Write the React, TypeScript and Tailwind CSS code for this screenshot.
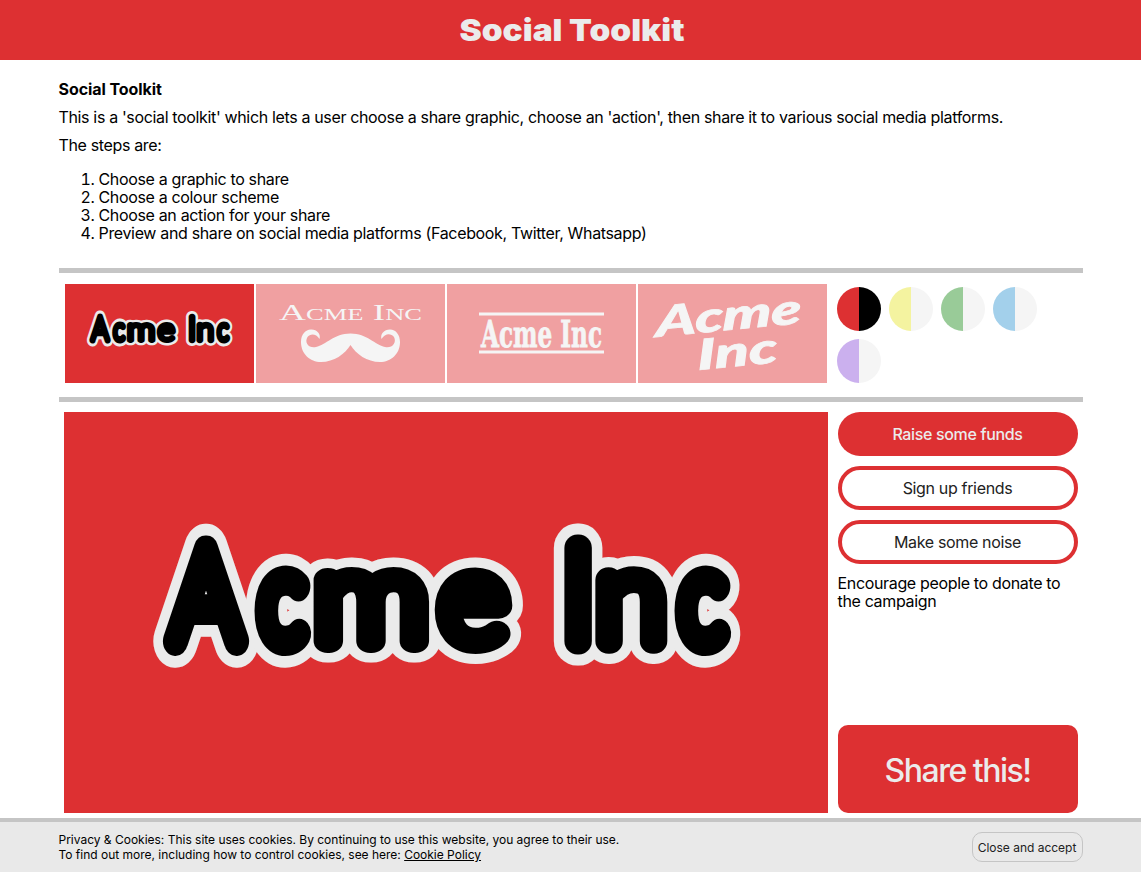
const bubbleGlyphs = [
  { char: 'A', x: 142, scaleX: 0.835, scaleY: 1.03 },
  { char: 'c', x: 218, scaleX: 0.75, scaleY: 0.97 },
  { char: 'm', x: 307, scaleX: 1.14, scaleY: 0.98 },
  { char: 'e', x: 409, scaleX: 1.02, scaleY: 0.97 },
  { char: 'I', x: 514, scaleX: 1, scaleY: 1.045 },
  { char: 'n', x: 567, scaleX: 1, scaleY: 0.98 },
  { char: 'c', x: 638, scaleX: 0.75, scaleY: 0.97 },
]

function BubbleLayer({ color, weight }: { color: string; weight: number }) {
  return (
    <g fill={color} stroke={color} strokeLinejoin="round" strokeLinecap="round" textAnchor="middle" fontFamily="Lato, sans-serif" fontWeight="100" fontSize="126">
      {bubbleGlyphs.map(({ char, x, scaleX, scaleY }) => (
        <text key={x} transform={`translate(${x} 228.5) scale(${scaleX} ${scaleY})`} strokeWidth={weight / Math.sqrt(scaleX)}>{char}</text>
      ))}
    </g>
  )
}

function BubbleLogo() {
  return (
    <svg viewBox="0 0 764 401" preserveAspectRatio="none" className="block h-full w-full" role="img" aria-label="Acme Inc">
      <BubbleLayer color="#ebebeb" weight={47} />
      <BubbleLayer color="#000" weight={26} />
    </svg>
  )
}

function MoustacheLogo() {
  return (
    <svg viewBox="0 0 189 99" className="block h-full w-full" fill="#f5f5f5">
      <text x="23" y="36" fontFamily="'Liberation Serif', serif" fontSize="22.500" textLength="143" lengthAdjust="spacingAndGlyphs" style={{ fontVariant: 'small-caps' }}>Acme Inc</text>
      <path d="M94.500 61C89 70 78 78 65 78C54 78 45 70 45 58C45 50 50 45 55.500 45.500C61 45.500 65 50 63.500 55C60 49 54 49.500 51.500 53C48 59 53 64.500 60 63C70 61 78 49.500 94.500 49.500C111 49.500 119 61 129 63C136 64.500 141 59 138 53C135 49 129 49 125.500 55C124 50 128 45.500 134 45.500C140 45.500 144 51 144 58C144 70 135 78 124 78C111 78 100 70 94.500 61Z" />
    </svg>
  )
}

function SlabLogo() {
  return (
    <svg viewBox="0 0 189 99" className="block h-full w-full" fill="#f5f5f5">
      <rect x="32" y="28.500" width="125" height="3" />
      <text transform="translate(94.500 63) scale(.625 1)" textAnchor="middle" fontFamily="'DejaVu Serif', serif" fontWeight="700" fontSize="37" stroke="#f5f5f5" strokeWidth=".8">Acme Inc</text>
      <rect x="32" y="66.500" width="125" height="3" />
    </svg>
  )
}

function ItalicLogo() {
  return (
    <svg viewBox="0 0 189 99" className="block h-full w-full" fill="#f5f5f5" stroke="#f5f5f5" strokeWidth=".8" fontFamily="Lato, sans-serif" fontWeight="900" fontStyle="italic" fontSize="42">
      <text transform="translate(18 53) rotate(-5.500) skewX(-6)" textLength="146" lengthAdjust="spacingAndGlyphs">Acme</text>
      <text transform="translate(60 86) rotate(-5.500) skewX(-3)" textLength="80" lengthAdjust="spacingAndGlyphs">Inc</text>
    </svg>
  )
}

const schemes = [
  ['#dd3032', '#000000'],
  ['#f4f3a0', '#f5f5f5'],
  ['#99cb98', '#f5f5f5'],
  ['#a3d0eb', '#f5f5f5'],
  ['#cbb0ee', '#f5f5f5'],
]

export default function App() {
  return (
    <div className="flex h-[872px] flex-col overflow-hidden bg-white font-[Inter,sans-serif] text-base leading-[18px] text-black">
      <header className="flex h-[60px] shrink-0 justify-center bg-[#dd3032]">
        <svg className="h-[60px] w-[240px]" viewBox="0 0 240 60">
          <text x="8.500" y="41" fill="#ebebeb" fontFamily="Inter, sans-serif" fontWeight="900" fontSize="30" textLength="225" lengthAdjust="spacingAndGlyphs">Social Toolkit</text>
        </svg>
      </header>

      <main className="mx-auto flex w-[1024px] grow flex-col">
        <section className="h-[208px] pt-5">
          <h1 className="mb-2.5 font-bold tracking-[-0.08px]">Social Toolkit</h1>
          <p className="mb-2.5 tracking-[-0.35px]">This is a 'social toolkit' which lets a user choose a share graphic, choose an 'action', then share it to various social media platforms.</p>
          <p className="mb-4 tracking-[-0.35px]">The steps are:</p>
          <ol className="list-decimal pl-10 tracking-[-0.34px]">
            <li>Choose a graphic to share</li>
            <li>Choose a colour scheme</li>
            <li>Choose an action for your share</li>
            <li>Preview and share on social media platforms (Facebook, Twitter, Whatsapp)</li>
          </ol>
        </section>

        <section className="flex h-[134px] gap-2.5 border-y-[5px] border-[#c5c5c5] pl-1.5 pt-[11px]">
          <div className="flex h-[99px] gap-0.5">
            <button className="h-[99px] w-[189px] bg-[#dd3032]"><BubbleLogo /></button>
            <button className="h-[99px] w-[189px] bg-[#f0a0a1]"><MoustacheLogo /></button>
            <button className="h-[99px] w-[189px] bg-[#f0a0a1]"><SlabLogo /></button>
            <button className="h-[99px] w-[189px] bg-[#f0a0a1]"><ItalicLogo /></button>
          </div>
          <div className="flex w-[236px] flex-wrap content-start gap-2 pt-[3px]">
            {schemes.map(([left, right]) => (
              <button key={left} className="flex size-11 overflow-hidden rounded-full" aria-label="Colour scheme">
                <span className="h-full w-1/2" style={{ background: left }} />
                <span className="h-full w-1/2" style={{ background: right }} />
              </button>
            ))}
          </div>
        </section>

        <section className="flex gap-2.5 pl-[5px] pt-2.5">
          <div className="h-[401px] w-[764px] bg-[#dd3032]"><BubbleLogo /></div>
          <div className="flex h-[401px] w-[240px] flex-col tracking-[-0.34px]">
            <div className="flex flex-col gap-2.5">
              <button className="h-11 rounded-full bg-[#dd3032] font-[450] text-[#ebebeb]">Raise some funds</button>
              <button className="h-11 rounded-full border-4 border-[#dd3032] text-[#222]">Sign up friends</button>
              <button className="h-11 rounded-full border-4 border-[#dd3032] text-[#222]">Make some noise</button>
            </div>
            <p className="mt-2.5">Encourage people to donate to the campaign</p>
            <button className="mt-auto h-[88px] rounded-[10px] bg-[#dd3032] pt-[3px] text-[32px] font-[450] tracking-[-1.5px] text-[#ebebeb]">Share this!</button>
          </div>
        </section>
      </main>

      <footer className="shrink-0 border-t-4 border-[#c5c5c5] bg-[#e9e9e9]">
        <div className="mx-auto flex h-[50px] w-[1024px] justify-between pt-2.5 text-xs leading-[15px] tracking-[-0.01px]">
          <p>
            Privacy &amp; Cookies: This site uses cookies. By continuing to use this website, you agree to their use.<br />
            To find out more, including how to control cookies, see here: <a href="#policy" className="underline">Cookie Policy</a>
          </p>
          <button className="h-[30px] w-[111px] rounded-[10px] border border-[#c5c5c5] text-[#222]">Close and accept</button>
        </div>
      </footer>
    </div>
  )
}
